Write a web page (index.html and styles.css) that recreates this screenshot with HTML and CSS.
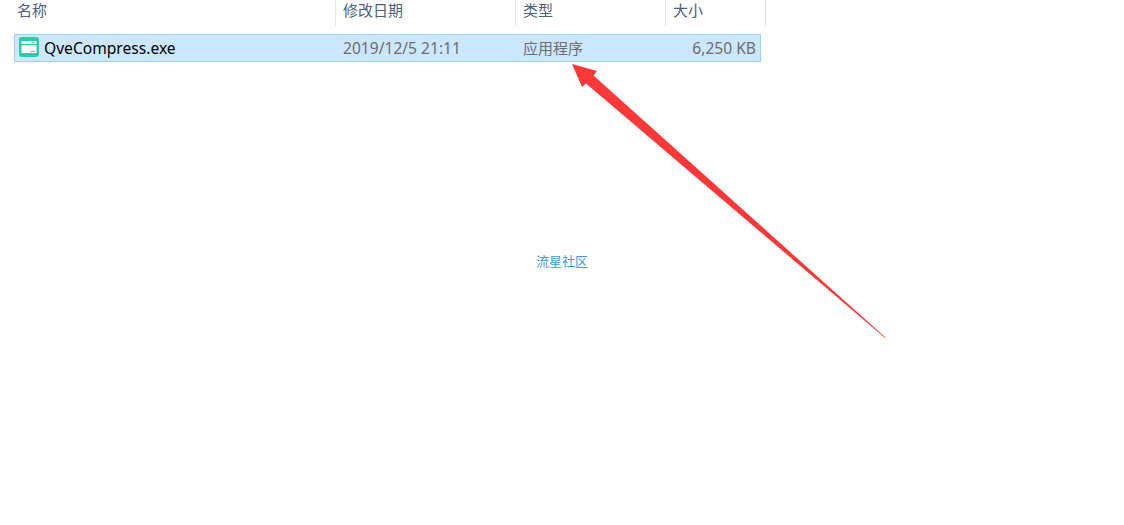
FILE: index.html
```
<!DOCTYPE html>
<html lang="zh-CN">
<head>
    <meta charset="UTF-8">
    <meta name="viewport" content="width=device-width, initial-scale=1.0">
    <title>QveCompress</title>
    <link rel="stylesheet" href="styles.css">
</head>
<body>
    <div class="explorer">
        <div class="columns header">
            <div class="cell">名称</div>
            <div class="cell">修改日期</div>
            <div class="cell">类型</div>
            <div class="cell">大小</div>
        </div>

        <div class="columns file selected">
            <div class="name">
                <svg class="icon" width="20" height="20" viewBox="0 0 20 20">
                    <rect width="20" height="20" rx="3" fill="#2ccda0"/>
                    <path d="M2.500 4h15v3h-15zM2.500 8h15v8h-15z" fill="#fff"/>
                    <path d="M12 5.200h4v0.800h-4zM11 14h5v0.800h-5z" fill="#2ccda0"/>
                </svg>
                <span class="filename">QveCompress.exe</span>
            </div>
            <div class="date">2019/12/5 21:11</div>
            <div class="type">应用程序</div>
            <div class="size">6,250 KB</div>
        </div>
    </div>

    <div class="watermark">流星社区</div>

    <!-- Red pointer arrow -->
    <svg class="arrow" width="315" height="276" viewBox="0 0 315 276">
        <path d="M0 0L25 7L21.500 11.500L313.800 273.800L313.400 274.300L14 19.500L10 23Z" fill="#fd3838"/>
    </svg>
</body>
</html>
```

FILE: styles.css
```
body {
    margin: 0;
    height: 525px;
    position: relative;
    overflow: hidden;
    background-color: #fff;
    font-family: "Noto Sans", "Noto Sans CJK SC", sans-serif;
    font-size: 15px;
}
.explorer {
    width: 766px;
}
.columns {
    display: grid;
    box-sizing: border-box;
}
.header {
    grid-template-columns: 336px 180px 150px 100px;
    height: 26px;
    color: #4c607a;
    line-height: 21px;
}
.header .cell {
    border-right: 1px solid #e5e5e5;
    padding-left: 7px;
}
.header .cell:first-child {
    padding-left: 17px;
}
.file {
    grid-template-columns: 328px 180px 150px 1fr;
    width: 747px;
    height: 28px;
    margin: 8px 0 0 14px;
    border: 1px solid #99d1ff;
    color: #6d6d6d;
    line-height: 26px;
}
.selected {
    background-color: #cce8ff;
}
.name {
    display: flex;
    padding-left: 4px;
    color: #000;
}
.icon {
    margin: 2px 5px 0 0;
}
.filename,
.date,
.size {
    font-size: 15.6px;
}
.size {
    text-align: right;
    padding-right: 4px;
}
.watermark {
    position: absolute;
    left: 536px;
    top: 252px;
    font-size: 13px;
    line-height: 18px;
    color: #3f9bea;
}
.arrow {
    position: absolute;
    left: 572px;
    top: 64px;
}
```
